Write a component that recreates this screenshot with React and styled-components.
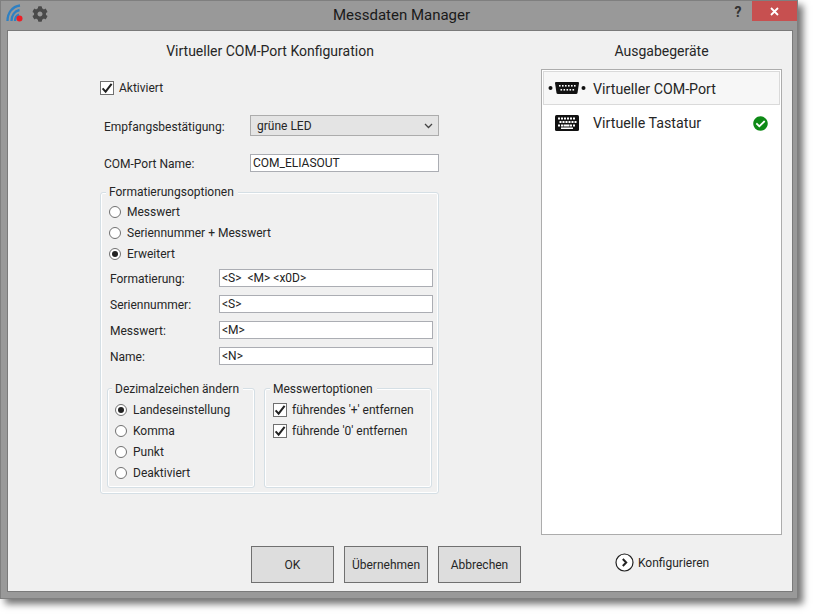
import React from 'react';
import styled, { createGlobalStyle } from 'styled-components';
import { FaCog, FaCheckCircle } from 'react-icons/fa';

const GlobalStyle = createGlobalStyle`
    html, body {
        margin: 0;
        padding: 0;
        background: #fff;
        font-family: Roboto, "Noto Sans", sans-serif;
        font-size: 12px;
        color: #262626;
    }
`;

const Page = styled.div`
    width: 815px;
    height: 615px;
    overflow: hidden;
`;

const Window = styled.div`
    width: 798px;
    height: 599px;
    box-sizing: border-box;
    display: flex;
    flex-direction: column;
    background: #999;
    border: 1px solid #7f7f7f;
    box-shadow: 5px 5px 7px rgba(0, 0, 0, 0.55);
`;

const TitleBar = styled.div`
    height: 29px;
    flex: none;
    display: flex;
    align-items: flex-start;
`;

const TitleIcons = styled.div`
    flex: 1;
    display: flex;
    align-items: center;
    gap: 8px;
    padding: 3px 0 0 5px;
    color: #4a4a4a;
`;

const Title = styled.div`
    text-align: center;
    font-size: 15px;
    line-height: 28px;
    color: #1a1a1a;
`;

const TitleButtons = styled.div`
    flex: 1;
    display: flex;
    justify-content: flex-end;
    align-items: flex-start;
`;

const Help = styled.div`
    width: 20px;
    margin-right: 4px;
    text-align: center;
    font-weight: 700;
    font-size: 14px;
    line-height: 22px;
    color: #333;
`;

const Close = styled.div`
    width: 45px;
    height: 20px;
    background: #c75050;
    color: #fff;
    display: flex;
    align-items: center;
    justify-content: center;
`;

const Client = styled.div`
    margin: 0 4px 6px 6px;
    flex: 1;
    min-height: 0;
    background: #f0f0f0;
    border: 1px solid #7a7a7a;
    display: flex;
`;

const LeftColumn = styled.div`
    width: 524px;
    flex: none;
    display: flex;
    flex-direction: column;
`;

const Heading = styled.div`
    font-size: 14px;
    line-height: 18px;
    text-align: center;
    padding-top: 11px;
    padding-left: ${p => p.$indent || 0}px;
`;

const Form = styled.div`
    padding: 17px 0 0 92px;
    width: 339px;
    flex: 1;
`;

const ActiveRow = styled.div`
    height: 16px;
    margin-bottom: 22px;
`;

const FieldRow = styled.div`
    display: flex;
    align-items: center;
    margin-bottom: ${p => p.$gap || 0}px;
`;

const FieldLabel = styled.div`
    width: ${p => p.$width}px;
    padding-left: ${p => p.$indent}px;
    padding-top: 2px;
    box-sizing: border-box;
    flex: none;
`;

const Select = styled.div`
    width: 189px;
    height: 21px;
    box-sizing: border-box;
    background: #e4e4e4;
    border: 1px solid #acacac;
    display: flex;
    align-items: center;
    justify-content: space-between;
    padding: 0 5px 0 6px;
`;

const TextField = styled.div`
    width: ${p => p.$width}px;
    height: 18px;
    box-sizing: border-box;
    background: #fff;
    border: 1px solid #abadb3;
    padding: 0 2px;
    line-height: 17px;
    white-space: pre;
    color: #222;
`;

const Group = styled.div`
    box-sizing: border-box;
    border: 1px solid #d5dfe5;
    border-radius: 3px;
    box-shadow: inset 0 0 0 1px #fff;
    height: ${p => p.$height}px;
    width: ${p => (p.$width ? `${p.$width}px` : 'auto')};
`;

const Legend = styled.div`
    width: fit-content;
    margin: ${p => p.$top}px 0 0 ${p => p.$offset}px;
    padding: 0 4px 0 3px;
    background: #f0f0f0;
    line-height: 16px;
    height: 16px;
`;

const RadioList = styled.div`
    display: flex;
    flex-direction: column;
    margin-top: ${p => p.$top}px;
    margin-left: ${p => p.$left}px;
`;

const OptionRow = styled.div`
    height: 21px;
    display: flex;
    align-items: center;
    white-space: nowrap;
`;

const RadioDot = styled.span`
    width: 12px;
    height: 12px;
    box-sizing: border-box;
    flex: none;
    border-radius: 50%;
    border: 1px solid #707070;
    background: #fff;
    margin-right: 6px;
    display: flex;
    align-items: center;
    justify-content: center;
    &::after {
        content: '';
        width: 6px;
        height: 6px;
        border-radius: 50%;
        background: ${p => (p.$on ? '#222' : 'transparent')};
    }
`;

const CheckBox = styled.span`
    width: 14px;
    height: 14px;
    box-sizing: border-box;
    flex: none;
    border: 1px solid #707070;
    background: #fff;
    margin-right: ${p => p.$gap || 5}px;
    display: inline-flex;
    align-items: center;
    justify-content: center;
`;

const FieldStack = styled.div`
    display: flex;
    flex-direction: column;
    gap: 8px;
    margin: 5px 0 0 9px;
`;

const SubGroups = styled.div`
    display: flex;
    gap: 9px;
    margin: 23px 0 0 6px;
`;

const RightColumn = styled.div`
    flex: 1;
    display: flex;
    flex-direction: column;
    padding-right: 10px;
`;

const DeviceList = styled.div`
    margin: 9px 0 0 9px;
    height: 466px;
    box-sizing: border-box;
    background: #fff;
    border: 1px solid #acacac;
    padding: 1px;
`;

const DeviceRow = styled.div`
    height: 34px;
    box-sizing: border-box;
    display: flex;
    align-items: center;
    font-size: 14.25px;
    background: ${p => (p.$selected ? '#f7f7f7' : '#fff')};
    border: 1px solid ${p => (p.$selected ? '#dadada' : 'transparent')};
    margin-bottom: 1px;
    padding-right: 11px;
`;

const DeviceIcon = styled.div`
    width: 46px;
    margin-right: 3px;
    flex: none;
    display: flex;
    justify-content: center;
    align-items: center;
`;

const DeviceName = styled.div`
    flex: 1;
    padding-top: ${p => (p.$selected ? 2 : 0)}px;
`;

const Footer = styled.div`
    height: 45px;
    flex: none;
`;

const ButtonBar = styled.div`
    display: flex;
    gap: 10px;
    padding-left: 243px;
`;

const Button = styled.div`
    width: ${p => p.$width}px;
    height: 37px;
    box-sizing: border-box;
    background: #dddddd;
    border: 1px solid #707070;
    display: flex;
    align-items: center;
    justify-content: center;
`;

const ConfigRow = styled.div`
    display: flex;
    align-items: center;
    gap: 4px;
    height: 19px;
    margin: 18px 0 0 83px;
`;

const Tick = ({ size = 12 }) => (
    <svg width={size} height={size} viewBox="0 0 12 12">
        <path d="M1.6 6.4 L4.6 9.6 L10.6 1.8" fill="none" stroke="#222" strokeWidth="2" />
    </svg>
);

const WifiIcon = () => (
    <svg width="18" height="19" viewBox="0 0 18 19">
        <g fill="none" stroke="#2e80c3" strokeWidth="2.3">
            <path d="M1.5 17 C1.5 9 6 2.5 14 1.5" />
            <path d="M5.5 17 C5.5 11.5 8.5 7 13.5 6" />
            <path d="M9 17 C9 14 10.5 11.5 13 10.5" />
        </g>
        <circle cx="13.5" cy="14.5" r="3" fill="#ee1c25" />
    </svg>
);

const SerialPortIcon = () => (
    <svg width="38" height="14" viewBox="0 0 38 14">
        <circle cx="2.5" cy="7" r="2" fill="#111" />
        <circle cx="35.5" cy="7" r="2" fill="#111" />
        <path d="M8 1 H30 Q31 1 31 2 L29.5 12 Q29.3 13 28 13 H10 Q8.7 13 8.5 12 L7 2 Q7 1 8 1 Z" fill="#111" />
        <g fill="#fff">
            {[11, 14, 17, 20, 23, 26].map(x => <rect key={x} x={x} y="4" width="1.6" height="1.6" />)}
            {[12.5, 15.5, 18.5, 21.5, 24.5].map(x => <rect key={x} x={x} y="8" width="1.6" height="1.6" />)}
        </g>
    </svg>
);

const KeyboardIcon = () => (
    <svg width="24" height="16" viewBox="0 0 24 16">
        <rect x="0" y="0" width="24" height="16" rx="1.5" fill="#111" />
        <g fill="#fff">
            {[3, 6, 9, 12, 15, 18].map(x => <rect key={x} x={x} y="2.5" width="2" height="2" />)}
            {[4.5, 7.5, 10.5, 13.5, 16.5, 19.5].map(x => <rect key={x} x={x} y="6" width="2" height="2" />)}
            {[3, 6, 15, 18].map(x => <rect key={x} x={x} y="9.5" width="2" height="2" />)}
            <rect x="8.5" y="9.5" width="6" height="2" />
            <rect x="6" y="12.5" width="12" height="1.5" />
        </g>
    </svg>
);

const ConfigIcon = () => (
    <svg width="19" height="19" viewBox="0 0 19 19">
        <circle cx="9.5" cy="9.5" r="8.5" fill="#fff" stroke="#222" strokeWidth="1.2" />
        <path d="M7.8 6 L11.2 9.5 L7.8 13" fill="none" stroke="#222" strokeWidth="2" />
    </svg>
);

const Radio = ({ on, children }) => (
    <OptionRow><RadioDot $on={on} />{children}</OptionRow>
);

const Check = ({ children, gap }) => (
    <OptionRow><CheckBox $gap={gap}><Tick /></CheckBox>{children}</OptionRow>
);

const formatFields = [
    ['Formatierung:', '<S>  <M> <x0D>'],
    ['Seriennummer:', '<S>'],
    ['Messwert:', '<M>'],
    ['Name:', '<N>'],
];

function App() {
    return (
        <Page>
            <GlobalStyle />
            <Window>
                <TitleBar>
                    <TitleIcons>
                        <WifiIcon />
                        <FaCog size={16} />
                    </TitleIcons>
                    <Title>Messdaten Manager</Title>
                    <TitleButtons>
                        <Help>?</Help>
                        <Close>
                            <svg width="9" height="9" viewBox="0 0 9 9">
                                <path d="M1 1 L8 8 M8 1 L1 8" stroke="#fff" strokeWidth="1.8" />
                            </svg>
                        </Close>
                    </TitleButtons>
                </TitleBar>
                <Client>
                    <LeftColumn>
                        <Heading>Virtueller COM-Port Konfiguration</Heading>
                        <Form>
                            <ActiveRow>
                                <Check gap={5}>Aktiviert</Check>
                            </ActiveRow>
                            <FieldRow $gap={18}>
                                <FieldLabel $width={150} $indent={4}>Empfangsbestätigung:</FieldLabel>
                                <Select>
                                    grüne LED
                                    <svg width="9" height="6" viewBox="0 0 9 6">
                                        <path d="M1 1 L4.5 4.5 L8 1" fill="none" stroke="#444" strokeWidth="1.3" />
                                    </svg>
                                </Select>
                            </FieldRow>
                            <FieldRow $gap={20}>
                                <FieldLabel $width={150} $indent={4}>COM-Port Name:</FieldLabel>
                                <TextField $width={189}>COM_ELIASOUT</TextField>
                            </FieldRow>
                            <Group $height={302}>
                                <Legend $top={-9} $offset={5}>Formatierungsoptionen</Legend>
                                <RadioList $top={1} $left={8}>
                                    <Radio>Messwert</Radio>
                                    <Radio>Seriennummer + Messwert</Radio>
                                    <Radio on>Erweitert</Radio>
                                </RadioList>
                                <FieldStack>
                                    {formatFields.map(([label, value]) => (
                                        <FieldRow key={label}>
                                            <FieldLabel $width={109} $indent={0}>{label}</FieldLabel>
                                            <TextField $width={214}>{value}</TextField>
                                        </FieldRow>
                                    ))}
                                </FieldStack>
                                <SubGroups>
                                    <Group $width={148} $height={100}>
                                        <Legend $top={-8} $offset={4}>Dezimalzeichen ändern</Legend>
                                        <RadioList $top={2} $left={7}>
                                            <Radio on>Landeseinstellung</Radio>
                                            <Radio>Komma</Radio>
                                            <Radio>Punkt</Radio>
                                            <Radio>Deaktiviert</Radio>
                                        </RadioList>
                                    </Group>
                                    <Group $width={168} $height={100}>
                                        <Legend $top={-8} $offset={5}>Messwertoptionen</Legend>
                                        <RadioList $top={2} $left={8}>
                                            <Check>führendes '+' entfernen</Check>
                                            <Check>führende '0' entfernen</Check>
                                        </RadioList>
                                    </Group>
                                </SubGroups>
                            </Group>
                        </Form>
                        <Footer>
                            <ButtonBar>
                                <Button $width={83}>OK</Button>
                                <Button $width={84}>Übernehmen</Button>
                                <Button $width={83}>Abbrechen</Button>
                            </ButtonBar>
                        </Footer>
                    </LeftColumn>
                    <RightColumn>
                        <Heading $indent={9}>Ausgabegeräte</Heading>
                        <DeviceList>
                            <DeviceRow $selected>
                                <DeviceIcon><SerialPortIcon /></DeviceIcon>
                                <DeviceName $selected>Virtueller COM-Port</DeviceName>
                            </DeviceRow>
                            <DeviceRow>
                                <DeviceIcon><KeyboardIcon /></DeviceIcon>
                                <DeviceName>Virtuelle Tastatur</DeviceName>
                                <FaCheckCircle size={15} color="#0e8a16" />
                            </DeviceRow>
                        </DeviceList>
                        <ConfigRow>
                            <ConfigIcon />
                            Konfigurieren
                        </ConfigRow>
                    </RightColumn>
                </Client>
            </Window>
        </Page>
    );
}

export default App;
